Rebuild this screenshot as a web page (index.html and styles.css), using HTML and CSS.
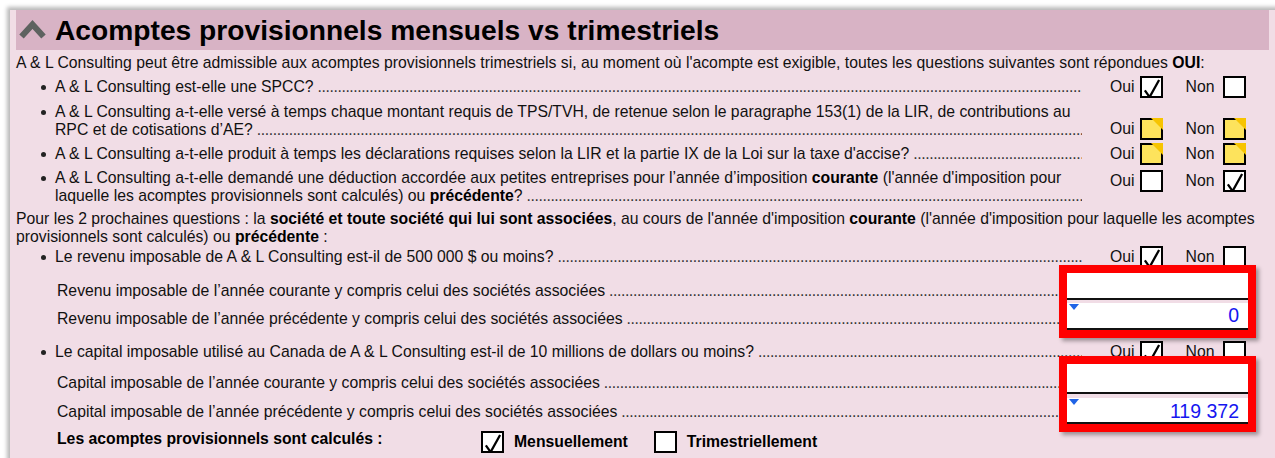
FILE: index.html
```html
<!DOCTYPE html>
<html lang="fr">
<head>
<meta charset="utf-8">
<title>Acomptes provisionnels</title>
<link rel="stylesheet" href="styles.css">
</head>
<body>
<div class="panel">
  <div class="titlebar">
    <svg class="chev" width="27" height="20" viewBox="0 0 27 20"><polyline points="2.5,17.5 13.5,5.5 24.5,17.5" fill="none" stroke="#5e6260" stroke-width="6"/></svg>
    <h1>Acomptes provisionnels mensuels vs trimestriels</h1>
  </div>
  <div class="content">
    <p class="intro">A &amp; L Consulting peut être admissible aux acomptes provisionnels trimestriels si, au moment où l'acompte est exigible, toutes les questions suivantes sont répondues <b>OUI</b>:</p>

    <div class="q q1">
      <div class="qt"><span class="lead">A &amp; L Consulting est-elle une SPCC?</span></div>
      <div class="ans">
        <span class="oui">Oui</span><span class="cb"><svg viewBox="0 0 20 20"><polyline points="3,12 8,19 18,1" fill="none" stroke="#000" stroke-width="2.4"/></svg></span>
        <span class="non">Non</span><span class="cb"></span>
      </div>
    </div>

    <div class="q q2 end">
      <div class="qt"><span class="lead"><span>A &amp; L Consulting a-t-elle versé à temps chaque montant requis de TPS/TVH, de retenue selon le paragraphe 153(1) de la LIR, de contributions au</span> <span>RPC et de cotisations d’AE?</span></span></div>
      <div class="ans">
        <span class="oui">Oui</span><span class="cb yel"></span>
        <span class="non">Non</span><span class="cb yel"></span>
      </div>
    </div>

    <div class="q q3">
      <div class="qt"><span class="lead">A &amp; L Consulting a-t-elle produit à temps les déclarations requises selon la LIR et la partie IX de la Loi sur la taxe d'accise?</span></div>
      <div class="ans">
        <span class="oui">Oui</span><span class="cb yel"></span>
        <span class="non">Non</span><span class="cb yel"></span>
      </div>
    </div>

    <div class="q q4">
      <div class="qt"><span class="lead"><span>A &amp; L Consulting a-t-elle demandé une déduction accordée aux petites entreprises pour l’année d’imposition</span> <b>courante</b> <span>(l'année d'imposition pour</span> <span>laquelle les acomptes provisionnels sont calculés) ou</span> <b>précédente</b>?</span></div>
      <div class="ans">
        <span class="oui">Oui</span><span class="cb"></span>
        <span class="non">Non</span><span class="cb"><svg viewBox="0 0 20 20"><polyline points="3,12 8,19 18,1" fill="none" stroke="#000" stroke-width="2.4"/></svg></span>
      </div>
    </div>

    <p class="para"><span>Pour les 2 prochaines questions : la</span> <b>société et toute société qui lui sont associées</b>, <span>au cours de l'année d'imposition</span> <b>courante</b> <span>(l'année d'imposition pour laquelle les acomptes</span> <span>provisionnels sont calculés) ou</span> <b>précédente</b> :</p>

    <div class="q q5">
      <div class="qt"><span class="lead">Le revenu imposable de A &amp; L Consulting est-il de 500 000 $ ou moins?</span></div>
      <div class="ans">
        <span class="oui">Oui</span><span class="cb"><svg viewBox="0 0 20 20"><polyline points="3,12 8,19 18,1" fill="none" stroke="#000" stroke-width="2.4"/></svg></span>
        <span class="non">Non</span><span class="cb"></span>
      </div>
    </div>

    <div class="grp g1">
      <div class="labels">
        <div class="lr"><span class="lead">Revenu imposable de l’année courante y compris celui des sociétés associées</span></div>
        <div class="lr"><span class="lead">Revenu imposable de l’année précédente y compris celui des sociétés associées</span></div>
      </div>
      <div class="inputs">
        <div class="inp"></div>
        <div class="inp calc"><span class="tri"></span>0</div>
      </div>
    </div>

    <div class="q q6">
      <div class="qt"><span class="lead">Le capital imposable utilisé au Canada de A &amp; L Consulting est-il de 10 millions de dollars ou moins?</span></div>
      <div class="ans">
        <span class="oui">Oui</span><span class="cb"><svg viewBox="0 0 20 20"><polyline points="3,12 8,19 18,1" fill="none" stroke="#000" stroke-width="2.4"/></svg></span>
        <span class="non">Non</span><span class="cb"></span>
      </div>
    </div>

    <div class="grp g2">
      <div class="labels">
        <div class="lr"><span class="lead">Capital imposable de l’année courante y compris celui des sociétés associées</span></div>
        <div class="lr"><span class="lead">Capital imposable de l’année précédente y compris celui des sociétés associées</span></div>
      </div>
      <div class="inputs">
        <div class="inp"></div>
        <div class="inp calc"><span class="tri"></span>119 372</div>
      </div>
    </div>

    <div class="final">
      <b class="flab">Les acomptes provisionnels sont calculés :</b>
      <span class="opt"><span class="cb"><svg viewBox="0 0 20 20"><polyline points="3,12 8,19 18,1" fill="none" stroke="#000" stroke-width="2.4"/></svg></span><b>Mensuellement</b></span>
      <span class="opt"><span class="cb"></span><b>Trimestriellement</b></span>
    </div>
  </div>
</div>
</body>
</html>
```
FILE: styles.css
```css
html, body {
  margin: 0;
  padding: 0;
  background: #ffffff;
  overflow: hidden;
}
body {
  font-family: "Liberation Sans", Arial, sans-serif;
  font-size: 15.75px;
  color: #111;
}
.panel {
  margin: 10px 0 0 10px;
  width: 1275px;
  height: 470px;
  background: #f1dde6;
  box-shadow: -3px -3px 4px rgba(0,0,0,0.28);
  padding-left: 6px;
  box-sizing: border-box;
}
.titlebar {
  width: 1253px;
  height: 40px;
  background: #d8b3c5;
  display: flex;
  align-items: center;
}
.chev {
  margin-left: 3px;
  margin-right: 9px;
  margin-top: -2px;
}
h1 {
  margin: 0;
  font-size: 28.2px;
  font-weight: bold;
  color: #000;
}
.content {
  width: 1232px;
  line-height: 18px;
}
.intro {
  margin: 4px 0 0;
}
.q {
  display: flex;
  align-items: center;
  margin-top: 3px;
  min-height: 24px;
}
.q.end { align-items: flex-end; }
.q2 { margin-top: 4px; }
.q2 .ans { margin-bottom: -1px; }
.q4 { align-items: flex-start; }
.qt {
  flex: 1;
  padding-left: 39px;
  overflow: hidden;
  position: relative;
  margin-right: 28px;
}
.qt::before {
  content: "";
  position: absolute;
  left: 25px;
  top: 7px;
  width: 5px;
  height: 5px;
  border-radius: 50%;
  background: #222;
}
.lead::after {
  content: "........................................................................................................................................................................................................................................................................................................................................................................";
  position: absolute;
  white-space: nowrap;
  padding-left: 4px;
  color: #333;
  letter-spacing: -0.4px;
}
.ans {
  display: flex;
  align-items: center;
  width: 138px;
}
.oui { margin-right: 5px; }
.non { margin-left: 23px; margin-right: 9px; }
.cb {
  width: 19px;
  height: 18px;
  border: 2px solid #000;
  background: #fff;
  position: relative;
  display: inline-block;
  flex: none;
}
.cb svg {
  position: absolute;
  left: 0;
  top: 1px;
  width: 19px;
  height: 19px;
}
.cb.yel {
  background: #fde35c;
}
.cb.yel::after {
  content: "";
  position: absolute;
  right: -2px;
  top: -2px;
  border-style: solid;
  border-width: 0 12px 12px 0;
  border-color: transparent #f7c400 transparent transparent;
}
.q4 .ans { margin-top: 1px; }
.para {
  margin: 5px -12px 0 0;
}
.q5 { margin-top: -1px; }
.grp {
  display: flex;
  margin-top: 4px;
}
.labels {
  flex: 1;
  padding-left: 41px;
  padding-top: 4px;
}
.lr {
  height: 28px;
  line-height: 28px;
  overflow: hidden;
  position: relative;
  margin-right: 8px;
}
.inputs {
  width: 181px;
  align-self: flex-start;
  outline: 8px solid #f00;
  box-shadow: 3px 3px 4px 8px rgba(0,0,0,0.35);
  position: relative;
}
.inp {
  height: 25px;
  border-bottom: 2px solid #111;
  background: #fff;
  position: relative;
  text-align: right;
  padding-right: 9px;
  line-height: 25px;
  color: #1616f0;
  font-size: 19.5px;
}
.inp + .inp {
  margin-top: 3px;
}
.g2 { margin-top: 0; }
.g2 .inp:first-child { height: 28px; }
.g2 .inp + .inp { margin-top: 4px; height: 24px; line-height: 26px; }
.g2 .lr { height: 29px; line-height: 29px; }
.tri {
  position: absolute;
  left: 2px;
  top: 1px;
  border-style: solid;
  border-width: 6px 5px 0 5px;
  border-color: #1f63e6 transparent transparent transparent;
}
.q6 { margin-top: 7px; }
.final {
  display: flex;
  align-items: center;
  margin-top: 5px;
  padding-left: 41px;
}
.flab { width: 424px; margin-top: -6px; }
.opt {
  display: flex;
  align-items: center;
  margin-right: 26px;
}
.opt .cb { margin-right: 10px; }
b { font-weight: bold; color: #000; }
```
